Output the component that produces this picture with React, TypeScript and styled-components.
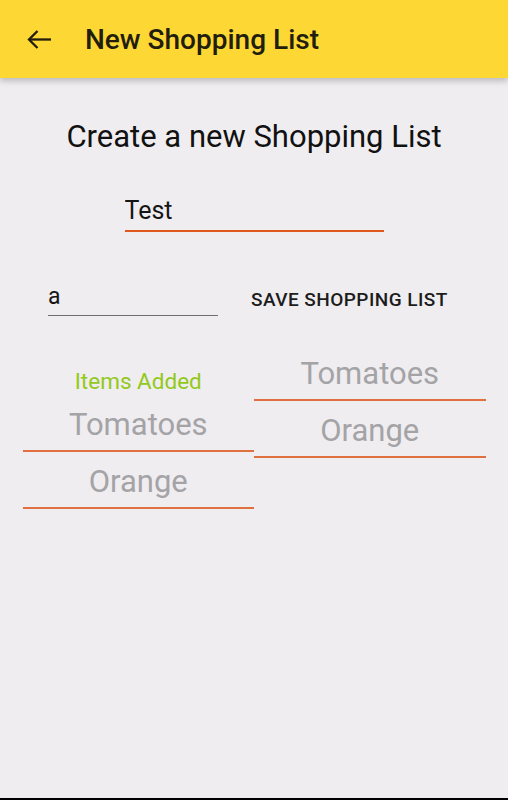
import * as React from 'react';
import styled, { createGlobalStyle } from 'styled-components';

const GlobalStyle = createGlobalStyle`
  html, body {
    margin: 0;
    padding: 0;
    height: 100%;
  }
  body {
    background: #efedf0;
    font-family: Roboto, "Noto Sans", "Liberation Sans", sans-serif;
  }
  #root {
    min-height: 100%;
  }
`;

const Screen = styled.div`
  width: 508px;
  height: 800px;
  display: flex;
  flex-direction: column;
  background: #efedf0;
  overflow: hidden;
`;

const Toolbar = styled.header`
  height: 78px;
  flex-shrink: 0;
  display: flex;
  align-items: center;
  padding-left: 27px;
  background: #fdd835;
  box-shadow: 0 3px 6px rgba(0, 0, 0, 0.22);
  position: relative;
  z-index: 1;
`;

const BackButton = styled.button`
  border: 0;
  background: none;
  padding: 0;
  width: 25px;
  height: 20px;
  display: flex;
  align-items: center;
  color: #221d0c;
  margin-right: 33px;
`;

const ToolbarTitle = styled.h1`
  margin: 0;
  font-size: 28px;
  font-weight: 500;
  color: #221d0c;
`;

const Content = styled.main`
  flex: 1;
  display: flex;
  flex-direction: column;
  align-items: center;
  padding-top: 41px;
`;

const Heading = styled.h2`
  margin: 0;
  font-size: 31px;
  line-height: 36px;
  font-weight: 400;
  color: #111;
`;

const Field = styled.input<{ $width: number; $accent?: boolean; $size: number }>`
  box-sizing: border-box;
  width: ${(p) => p.$width}px;
  border: 0;
  border-bottom: ${(p) => (p.$accent ? '2px solid #e0581c' : '1px solid #6e6e6e')};
  background: transparent;
  font-family: inherit;
  font-size: ${(p) => p.$size}px;
  line-height: ${(p) => p.$size + 6}px;
  color: #151515;
  padding: 0 0 4px 0;
  outline: none;
`;

const NameField = styled(Field)`
  margin-top: 40px;
`;

const ActionRow = styled.div`
  align-self: stretch;
  display: flex;
  align-items: center;
  padding-left: 48px;
  margin-top: 50px;
`;

const SaveButton = styled.button`
  border: 0;
  background: none;
  padding: 0;
  margin-left: 33px;
  font-family: inherit;
  font-size: 19px;
  font-weight: 500;
  letter-spacing: 0.45px;
  color: #1c1c1c;
  text-transform: uppercase;
`;

const Columns = styled.div`
  display: flex;
  align-items: flex-start;
  width: 463px;
  margin-top: 28px;
`;

const Column = styled.div<{ $offset?: number }>`
  flex: 1;
  display: flex;
  flex-direction: column;
  padding-top: ${(p) => p.$offset ?? 0}px;
`;

const ColumnLabel = styled.div`
  text-align: center;
  font-size: 22.5px;
  line-height: 27px;
  color: #92c91a;
`;

const Item = styled.div`
  text-align: center;
  font-size: 31px;
  line-height: 36px;
  color: #a4a3a6;
  padding: 12px 0 7px;
  border-bottom: 2px solid #e07040;
`;

const BottomEdge = styled.div`
  height: 2px;
  background: #000;
  flex-shrink: 0;
`;

const ArrowBack = () => (
  <svg width="25" height="19" viewBox="0 0 25 19" fill="none" stroke="currentColor" strokeWidth="2.3">
    <path d="M24 9.5H2" />
    <path d="M10.5 1 2 9.5l8.5 8.5" />
  </svg>
);

const added = ['Tomatoes', 'Orange'];
const suggested = ['Tomatoes', 'Orange'];

export default function App() {
  return (
    <Screen>
      <GlobalStyle />
      <Toolbar>
        <BackButton aria-label="Back">
          <ArrowBack />
        </BackButton>
        <ToolbarTitle>New Shopping List</ToolbarTitle>
      </Toolbar>
      <Content>
        <Heading>Create a new Shopping List</Heading>
        <NameField $width={259} $size={25} $accent defaultValue="Test" />
        <ActionRow>
          <Field $width={170} $size={23} defaultValue="a" />
          <SaveButton>Save Shopping List</SaveButton>
        </ActionRow>
        <Columns>
          <Column $offset={24}>
            <ColumnLabel>Items Added</ColumnLabel>
            {added.map((name) => (
              <Item key={name}>{name}</Item>
            ))}
          </Column>
          <Column>
            {suggested.map((name) => (
              <Item key={name}>{name}</Item>
            ))}
          </Column>
        </Columns>
      </Content>
      <BottomEdge />
    </Screen>
  );
}
